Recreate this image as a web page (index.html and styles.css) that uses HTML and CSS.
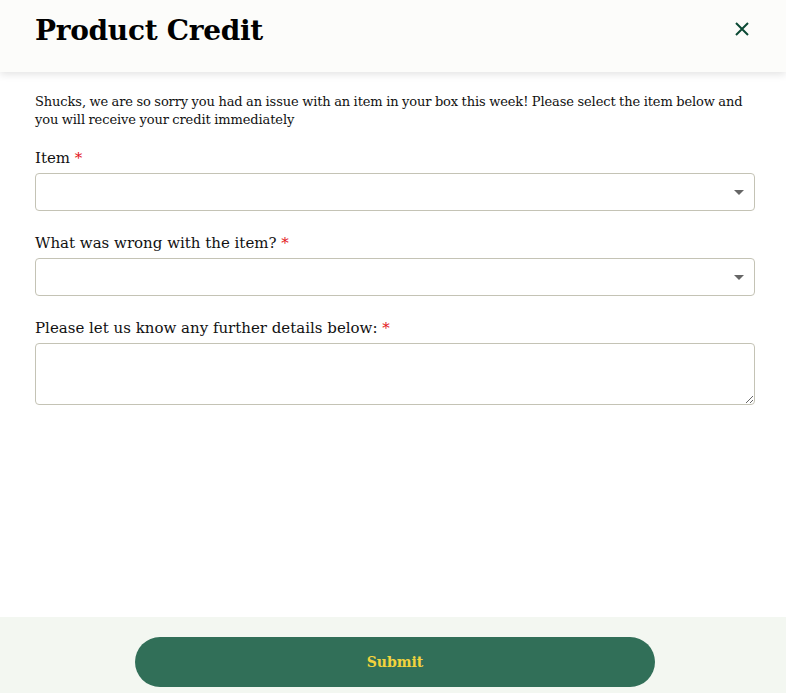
FILE: index.html
```html
<!DOCTYPE html>
<html lang="en">
<head>
    <meta charset="UTF-8">
    <meta name="viewport" content="width=device-width, initial-scale=1.0">
    <title>Product Credit</title>
    <link rel="stylesheet" href="styles.css">
</head>
<body>
    <div class="modal">
        <div class="modal-header">
            <h1>Product Credit</h1>
            <button class="close-btn" type="button" aria-label="Close">
                <svg width="16" height="16" viewBox="0 0 16 16">
                    <path d="M2 2 L14 14 M14 2 L2 14" stroke="#0c4a35" stroke-width="2" fill="none"/>
                </svg>
            </button>
        </div>

        <form class="modal-body" id="creditForm">
            <p class="intro">Shucks, we are so sorry you had an issue with an item in your box this week! Please select the item below and you will receive your credit immediately</p>

            <div class="field">
                <label for="item">Item <span class="req">*</span></label>
                <div class="select-wrap">
                    <select id="item" name="item"><option></option></select>
                </div>
            </div>

            <div class="field">
                <label for="issue">What was wrong with the item? <span class="req">*</span></label>
                <div class="select-wrap">
                    <select id="issue" name="issue"><option></option></select>
                </div>
            </div>

            <div class="field">
                <label for="details">Please let us know any further details below: <span class="req">*</span></label>
                <textarea id="details" name="details"></textarea>
            </div>
        </form>

        <div class="modal-footer">
            <button type="submit" form="creditForm" class="submit-btn">Submit</button>
        </div>
    </div>
</body>
</html>
```

FILE: styles.css
```css
        body {
            font-family: "DejaVu Serif", serif;
            margin: 0;
            padding: 0;
            background-color: #ffffff;
            color: #111;
        }
        .modal {
            display: flex;
            flex-direction: column;
            height: 693px;
        }
        .modal-header {
            background-color: #fcfcfa;
            height: 72px;
            padding: 0 35px;
            display: flex;
            align-items: center;
            justify-content: space-between;
            box-shadow: 0 2px 8px rgba(0, 0, 0, 0.12);
            position: relative;
            z-index: 1;
        }
        .modal-header h1 {
            margin: 0 0 12px;
            font-size: 28px;
            font-weight: bold;
            color: #000;
            letter-spacing: -0.3px;
        }
        .close-btn {
            background: none;
            border: none;
            padding: 0;
            margin: 0 1px 14px 0;
            cursor: pointer;
            display: flex;
        }
        .modal-body {
            flex: 1;
            padding: 21px 31px 0 35px;
        }
        .intro {
            margin: 0 0 19px;
            font-size: 13px;
            line-height: 18px;
            letter-spacing: -0.1px;
            word-spacing: -0.5px;
        }
        .field {
            margin-bottom: 22px;
        }
        .field label {
            display: block;
            font-size: 15px;
            line-height: 20px;
            margin-bottom: 5px;
        }
        .req {
            color: #e3141b;
        }
        .select-wrap {
            position: relative;
        }
        .select-wrap::after {
            content: "";
            position: absolute;
            right: 11px;
            top: 17px;
            border-left: 5px solid transparent;
            border-right: 5px solid transparent;
            border-top: 5px solid #666;
            pointer-events: none;
        }
        select, textarea {
            display: block;
            width: 100%;
            box-sizing: border-box;
            border: 1px solid #c4c3b5;
            border-radius: 4px;
            background: #fff;
            font-family: inherit;
            font-size: 15px;
        }
        select {
            height: 38px;
            appearance: none;
            -webkit-appearance: none;
        }
        textarea {
            height: 62px;
            resize: vertical;
        }
        .modal-footer {
            background-color: #f3f7f1;
            height: 76px;
            padding-top: 20px;
            box-sizing: border-box;
            display: flex;
            align-items: flex-start;
            justify-content: center;
        }
        .submit-btn {
            width: 520px;
            height: 50px;
            margin-left: 4px;
            border: none;
            border-radius: 25px;
            background-color: #316f58;
            color: #f2d33d;
            font-family: inherit;
            font-weight: bold;
            font-size: 14px;
            cursor: pointer;
        }
        .submit-btn:hover {
            background-color: #285c49;
        }
```
